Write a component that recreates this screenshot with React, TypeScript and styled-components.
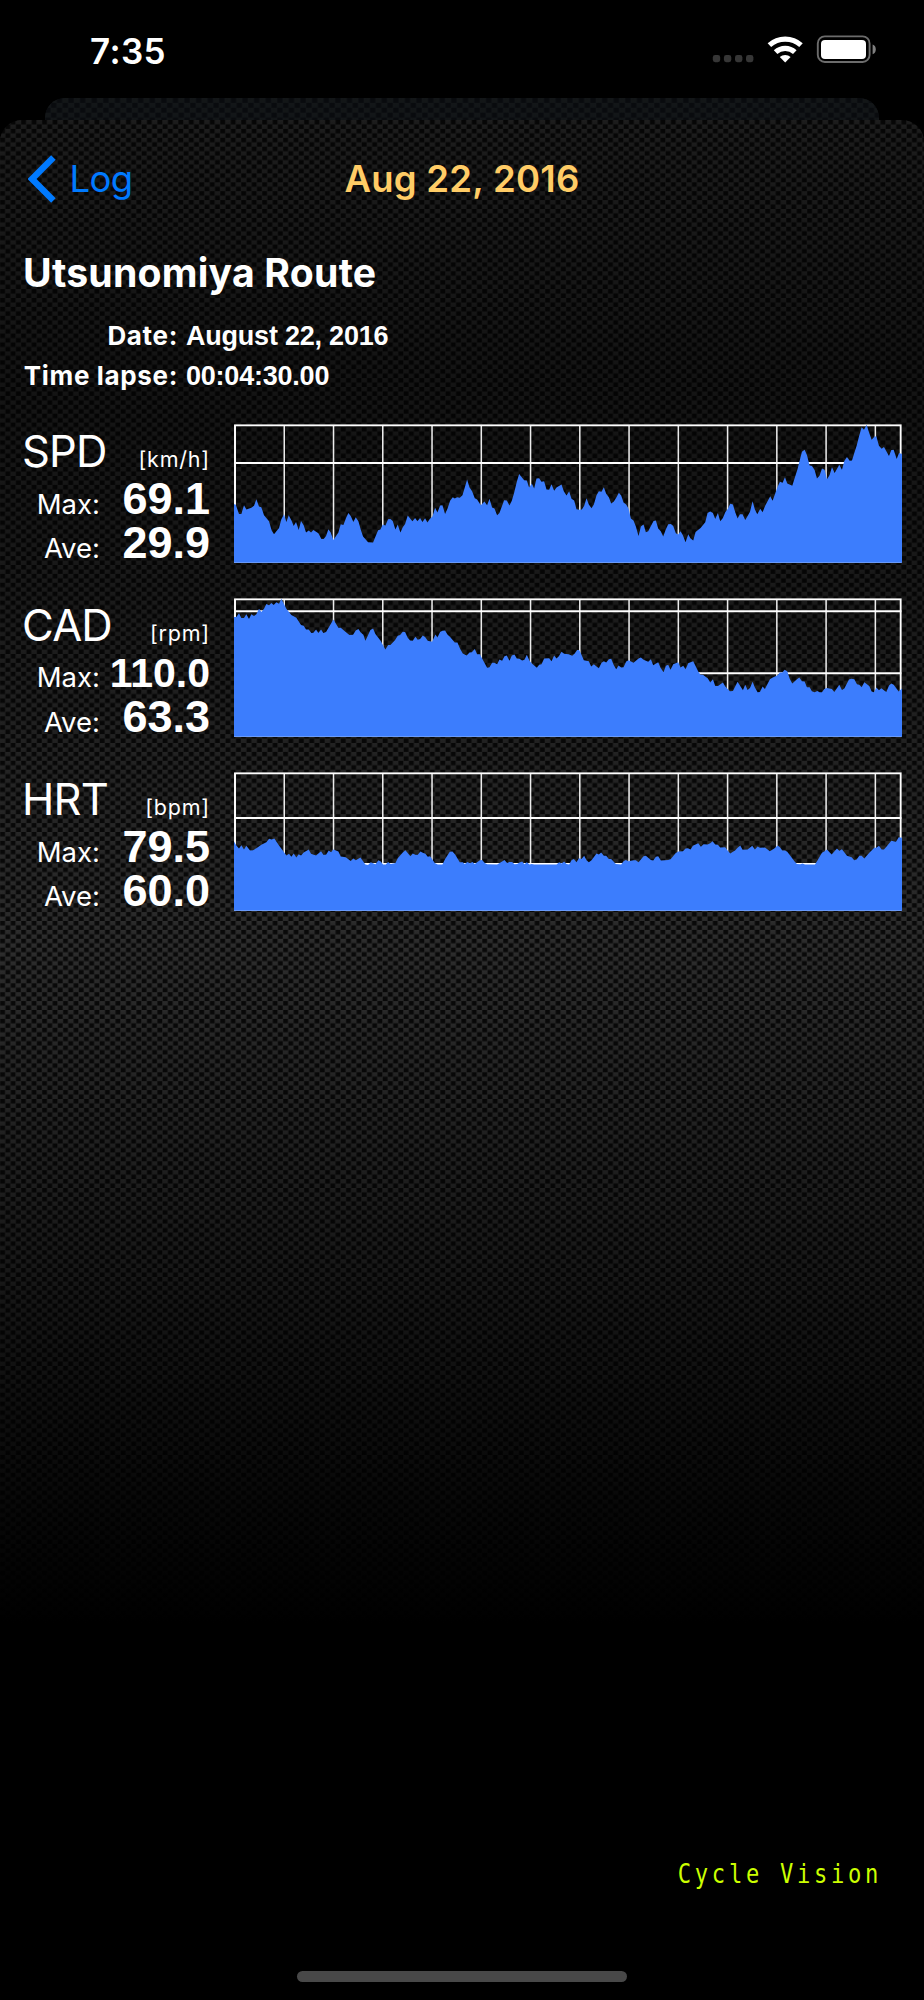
import React from "react";
import styled, { createGlobalStyle } from "styled-components";

const GlobalStyle = createGlobalStyle`
  *, *::before, *::after { box-sizing: border-box; }
  html, body { margin: 0; padding: 0; background: #000; }
  body { font-family: Inter, "Liberation Sans", sans-serif; color: #fff; }
`;

const Screen = styled.div`
  position: relative;
  width: 924px;
  height: 2000px;
  overflow: hidden;
  background: #000;
  display: flex;
  flex-direction: column;
`;

const StatusBar = styled.header`
  height: 98px;
  flex: none;
  display: flex;
  justify-content: space-between;
  align-items: flex-start;
  padding: 33px 46px 0 90px;
`;

const Clock = styled.div`
  font-size: 35px;
  line-height: 36px;
  font-weight: 600;
  letter-spacing: 0.4px;
`;

const StatusIcons = styled.div`
  display: flex;
  padding-top: 1px;
  svg { display: block; }
`;

const BackSheet = styled.div`
  position: relative;
  height: 22px;
  flex: none;
  margin: 0 45px;
  border-radius: 20px 20px 0 0;
  background: #0b0e10;
  overflow: hidden;
`;

const Sheet = styled.main`
  position: relative;
  flex: 1;
  border-radius: 22px 22px 0 0;
  background: #000;
  overflow: hidden;
  display: flex;
  flex-direction: column;
`;

const TextureSvg = styled.svg`
  position: absolute;
  inset: 0;
  width: 100%;
  height: 100%;
  display: block;
`;

const NavBar = styled.nav`
  position: relative;
  height: 118px;
  flex: none;
  display: grid;
  grid-template-columns: 1fr auto 1fr;
  align-items: center;
  padding: 0 28px;
`;

const BackButton = styled.button`
  display: flex;
  align-items: center;
  gap: 13.5px;
  padding: 0;
  border: 0;
  background: none;
  color: #007aff;
  font: 400 36.5px/44px Inter, sans-serif;
  letter-spacing: -0.6px;
`;

const NavTitle = styled.h1`
  margin: 0;
  color: #ffcc66;
  font-size: 36.5px;
  line-height: 44px;
  font-weight: 600;
  letter-spacing: 0.25px;
`;

const RouteName = styled.h2`
  position: relative;
  margin: 11px 0 0 23px;
  font-size: 39.2px;
  line-height: 48px;
  font-weight: 700;
  letter-spacing: 0.2px;
  white-space: nowrap;
`;

const Facts = styled.dl`
  position: relative;
  margin: 19px 0 0 22px;
  display: grid;
  grid-template-columns: 156px auto;
  column-gap: 8px;
  grid-auto-rows: 40px;
  align-items: center;
`;

const FactLabel = styled.dt`
  text-align: right;
  font-size: 26px;
  line-height: 40px;
  font-weight: 700;
  letter-spacing: 0.65px;
  white-space: nowrap;
`;

const FactValue = styled.dd`
  margin: 0;
  font-family: "Liberation Sans", sans-serif;
  font-size: 27px;
  line-height: 40px;
  font-weight: 700;
  letter-spacing: -0.22px;
  white-space: nowrap;
`;

const Metrics = styled.div`
  position: relative;
  margin-top: 27.5px;
  padding: 0 22px 0 22px;
  display: flex;
  flex-direction: column;
  gap: 35px;
`;

const MetricRow = styled.section`
  height: 139px;
  display: grid;
  grid-template-columns: 188px 668px;
  column-gap: 24px;
`;

const Readout = styled.div`
  display: flex;
  flex-direction: column;
`;

const MetricHead = styled.div`
  height: 53px;
  display: flex;
  justify-content: space-between;
  align-items: baseline;
`;

const MetricName = styled.h3`
  margin: 0;
  font-size: 43.5px;
  line-height: 54px;
  font-weight: 400;
  letter-spacing: -0.8px;
`;

const Unit = styled.span`
  font-size: 21.5px;
  font-weight: 400;
  letter-spacing: 0.8px;
`;

const Stat = styled.div`
  height: 44px;
  display: flex;
  align-items: baseline;
  justify-content: space-between;
  line-height: 44px;
`;

const StatLabel = styled.span`
  width: 78px;
  text-align: right;
  font-size: 27.5px;
  font-weight: 400;
`;

const StatValue = styled.span<{ $size: number }>`
  font-family: "Liberation Sans", sans-serif;
  font-size: ${(p) => p.$size}px;
  font-weight: 700;
  white-space: nowrap;
`;

const Chart = styled.svg`
  display: block;
  width: 668px;
  height: 139px;
  overflow: visible;
`;

const Footer = styled.footer`
  position: relative;
  margin-top: auto;
  height: 170px;
  display: flex;
  flex-direction: column;
  align-items: flex-end;
`;

const Brand = styled.div`
  margin: 25.5px 41.5px 0 0;
  color: #ccff00;
  font-family: "DejaVu Sans Mono", monospace;
  font-size: 27px;
  line-height: 36px;
  letter-spacing: 4.5px;
  transform: scaleX(0.82);
  transform-origin: right center;
  white-space: nowrap;
`;

const HomeIndicator = styled.div`
  align-self: center;
  margin-top: 79.5px;
  width: 330px;
  height: 11px;
  border-radius: 6px;
  background: #484848;
`;

interface WeaveProps {
  id: string;
  cellW: number;
  cellH: number;
  tint: string;
  shadow: string;
  fade?: boolean;
}

function Weave({ id, cellW, cellH, tint, shadow, fade }: WeaveProps) {
  const cells = [
    [0, 0],
    [cellW, cellH],
  ];
  return (
    <TextureSvg aria-hidden="true">
      <defs>
        <linearGradient id={`${id}-thread`} x1="0" y1="0" x2="0" y2="1">
          <stop offset="0" stopColor={tint} />
          <stop offset="1" stopColor={tint} stopOpacity="0.62" />
        </linearGradient>
        <pattern id={id} width={cellW * 2} height={cellH * 2} patternUnits="userSpaceOnUse">
          <rect width={cellW * 2} height={cellH * 2} fill={tint} fillOpacity="0.75" />
          <rect x={cellW} y="0" width={cellW} height={cellH} fill={`url(#${id}-thread)`} />
          <rect x="0" y={cellH} width={cellW} height={cellH} fill={`url(#${id}-thread)`} />
          {cells.map(([x, y]) => (
            <rect key={x} x={x + 0.3} y={y} width={cellW - 0.6} height={cellH} fill={shadow} />
          ))}
        </pattern>
        <linearGradient id={`${id}-shade`} x1="0" y1="0" x2="0" y2="1">
          <stop offset="0" stopColor="#000" stopOpacity="0.36" />
          <stop offset="0.14" stopColor="#000" stopOpacity="0.56" />
          <stop offset="0.25" stopColor="#000" stopOpacity="0.42" />
          <stop offset="0.44" stopColor="#000" stopOpacity="0" />
          <stop offset="0.56" stopColor="#000" stopOpacity="0.32" />
          <stop offset="0.8" stopColor="#000" stopOpacity="1" />
          <stop offset="1" stopColor="#000" stopOpacity="1" />
        </linearGradient>
      </defs>
      <rect width="100%" height="100%" fill={`url(#${id})`} />
      {fade && <rect width="100%" height="100%" fill={`url(#${id}-shade)`} />}
    </TextureSvg>
  );
}

interface Metric {
  name: string;
  unit: string;
  max: string;
  ave: string;
  maxSize: number;
  top: number;
  grid: number[];
  trace: string;
}

const METRICS: Metric[] = [
  {
    name: "SPD",
    unit: "[km/h]",
    max: "69.1",
    ave: "29.9",
    maxSize: 45,
    top: 27,
    grid: [144],
    trace:
      "28,267 33,268 43,296 50,296 58,270 65,283 80,278 88,272 95,252 103,274 110,276 118,300 133,318 141,346 148,357 163,338 170,312 178,297 185,320 192,300 200,315 207,332 214,320 222,344 229,317 237,330 244,352 252,346 259,352 266,344 281,354 290,371 297,371 304,362 311,342 318,352 326,374 341,352 348,327 356,329 364,308 371,293 378,302 386,320 393,306 401,318 408,343 415,364 430,381 445,382 460,345 467,343 474,328 482,331 490,312 497,311 504,317 512,343 519,328 527,352 534,336 541,326 549,301 563,318 571,308 578,318 586,308 593,320 601,309 608,322 615,311 623,304 631,278 638,292 646,271 653,270 661,296 668,281 676,257 684,246 690,250 697,246 705,248 713,240 720,217 727,193 734,216 742,228 750,249 757,253 768,270 779,259 787,270 794,251 802,277 809,280 817,300 824,293 838,255 846,256 854,271 861,257 868,233 876,200 883,177 898,195 906,196 913,217 921,205 928,220 935,190 943,189 950,200 958,198 965,223 973,224 980,207 988,227 995,217 1010,208 1017,228 1025,241 1033,228 1040,251 1048,256 1055,282 1063,284 1071,283 1078,272 1085,249 1092,268 1100,279 1107,268 1115,240 1122,228 1130,230 1137,216 1144,236 1152,246 1159,265 1167,259 1174,248 1182,233 1189,241 1196,262 1204,268 1211,280 1218,310 1226,316 1233,334 1241,362 1248,334 1256,328 1263,351 1270,348 1286,317 1293,316 1300,340 1308,349 1315,364 1323,342 1330,327 1338,326 1345,332 1353,354 1360,358 1367,348 1374,360 1382,381 1390,357 1397,370 1405,376 1412,350 1427,338 1441,321 1448,293 1456,289 1464,293 1471,311 1479,293 1486,318 1494,308 1501,291 1508,282 1516,266 1524,268 1531,291 1538,310 1545,297 1553,297 1561,314 1575,290 1583,258 1590,283 1597,297 1606,281 1613,291 1621,271 1636,243 1643,257 1650,237 1658,215 1665,200 1673,203 1680,186 1687,205 1702,212 1709,189 1717,165 1724,137 1731,110 1739,104 1746,120 1754,151 1761,153 1769,165 1776,190 1784,181 1791,160 1799,164 1806,192 1814,180 1821,156 1829,174 1843,149 1851,164 1858,138 1866,126 1874,137 1881,136 1888,114 1895,92 1903,61 1910,37 1917,44 1925,29 1933,55 1940,74 1948,65 1954,64 1962,92 1970,101 1977,96 1992,123 1999,105 2006,104 2015,132 2022,114 2031,117",
  },
  {
    name: "CAD",
    unit: "[rpm]",
    max: "110.0",
    ave: "63.3",
    maxSize: 41,
    top: 25,
    grid: [65, 250],
    trace:
      "28,82 35,82 43,71 50,85 58,85 65,74 73,88 80,74 88,79 95,74 103,57 110,67 118,57 125,43 133,47 140,40 147,46 155,38 163,42 170,27 185,57 200,76 215,84 229,106 237,108 244,119 252,119 260,130 266,129 274,119 281,130 289,119 296,130 304,127 326,89 341,114 348,114 363,127 374,136 385,135 393,122 401,118 408,128 416,135 422,153 437,121 445,116 452,133 467,152 482,179 490,166 497,166 511,151 519,138 526,136 534,126 541,127 549,144 556,152 564,153 572,141 579,150 586,148 594,137 601,142 609,153 622,156 632,134 638,143 646,127 653,123 661,122 668,134 676,142 690,158 698,158 706,177 714,191 726,197 734,188 741,187 750,178 757,193 765,193 787,234 794,232 802,219 809,219 817,223 824,209 832,213 839,199 846,197 854,213 861,197 869,194 876,206 884,207 892,212 899,210 906,195 914,213 922,222 936,234 943,225 950,223 958,206 973,205 980,214 988,197 995,206 1002,199 1010,186 1018,192 1032,193 1042,198 1049,192 1057,181 1063,181 1070,195 1077,211 1092,214 1099,230 1107,223 1115,230 1122,235 1130,219 1137,214 1144,218 1152,208 1159,207 1167,226 1174,238 1181,227 1189,233 1196,232 1204,215 1211,211 1226,219 1241,206 1248,203 1256,210 1270,216 1278,208 1285,226 1300,217 1307,234 1316,247 1323,228 1330,225 1337,240 1345,223 1360,217 1367,233 1375,228 1382,238 1390,220 1397,217 1405,214 1420,245 1427,255 1434,255 1449,266 1456,278 1464,268 1471,288 1479,288 1494,278 1501,290 1515,304 1524,303 1538,276 1554,301 1561,285 1568,300 1575,294 1583,276 1590,293 1598,307 1605,306 1613,290 1620,297 1635,268 1642,264 1658,256 1665,248 1672,248 1679,240 1687,244 1694,266 1702,281 1716,268 1723,263 1731,274 1739,275 1746,292 1754,292 1761,304 1769,307 1777,303 1784,307 1791,307 1798,297 1806,294 1821,297 1828,306 1843,285 1851,300 1858,296 1872,269 1879,267 1888,268 1896,283 1903,285 1910,292 1918,277 1933,288 1940,305 1947,307 1954,293 1962,301 1969,295 1984,306 1992,287 1999,281 2006,285 2021,305 2031,296",
  },
  {
    name: "HRT",
    unit: "[bpm]",
    max: "79.5",
    ave: "60.0",
    maxSize: 45,
    top: 22,
    grid: [160, 297],
    trace:
      "28,230 35,242 43,251 50,241 58,254 65,243 76,257 85,256 95,250 110,240 125,232 133,222 141,224 149,221 163,242 178,262 185,272 193,267 200,276 207,266 215,278 222,268 229,272 237,263 252,254 259,267 274,272 289,259 296,270 304,270 312,257 319,262 326,254 341,260 348,275 363,277 378,288 386,281 393,286 407,278 422,299 430,300 438,292 452,298 461,286 468,290 475,299 483,299 490,291 498,297 512,294 519,280 534,263 542,256 557,274 564,266 572,270 579,270 587,260 594,264 602,267 609,276 616,274 630,294 639,299 653,299 661,282 675,261 683,260 691,269 705,292 714,292 720,297 728,291 735,295 743,291 750,297 765,286 772,285 780,294 787,298 817,299 832,290 839,285 847,294 854,291 862,291 869,298 877,297 884,293 892,290 899,298 906,292 914,299 921,297 928,299 995,299 1003,292 1010,296 1018,290 1025,297 1033,299 1040,286 1047,282 1055,292 1062,280 1070,282 1078,273 1085,286 1092,292 1100,286 1115,266 1122,269 1129,263 1137,273 1144,273 1152,282 1159,282 1173,297 1189,299 1196,289 1203,285 1211,289 1226,286 1233,286 1241,292 1256,274 1263,273 1278,285 1285,287 1293,276 1300,274 1308,287 1330,285 1337,283 1352,265 1360,260 1374,259 1382,251 1389,250 1397,254 1404,243 1412,239 1420,235 1428,246 1436,238 1448,239 1456,235 1463,229 1471,239 1479,240 1486,248 1501,247 1508,257 1516,266 1531,256 1538,249 1546,242 1553,255 1568,254 1582,243 1590,254 1598,245 1605,249 1620,248 1635,259 1649,250 1658,242 1665,247 1672,257 1680,257 1687,261 1709,290 1716,297 1726,298 1733,296 1740,299 1770,299 1776,289 1791,264 1799,259 1806,254 1820,269 1836,251 1843,258 1851,253 1866,273 1880,277 1888,286 1895,284 1903,273 1910,273 1918,281 1925,273 1933,264 1948,249 1954,249 1962,243 1970,254 1977,254 1984,246 1999,228 2013,231 2021,217 2031,219",
  },
];

const GRID_COLUMNS = Array.from({ length: 14 }, (_, i) => 31 + i * 147.7);

function MetricChart({ top, grid, trace }: Metric) {
  const bottom = top + 415;
  return (
    <Chart viewBox={`28 ${top} 2003 416`} preserveAspectRatio="none">
      <g stroke="#fff" fill="none">
        {GRID_COLUMNS.map((x) => (
          <line key={x} x1={x} x2={x} y1={top + 3} y2={bottom} strokeWidth="4.6" strokeOpacity="0.92" />
        ))}
        {grid.map((y) => (
          <line key={y} x1="28" x2="2029" y1={y} y2={y} strokeWidth="6" />
        ))}
        <rect x="31" y={top + 4} width="1996" height="409" strokeWidth="5.6" />
      </g>
      <polygon points={`28,${bottom} ${trace} 2031,${bottom}`} fill="#3c7dfd" />
    </Chart>
  );
}

function SignalIcons() {
  return (
    <svg width="166" height="30" viewBox="712 35 166 30" aria-hidden="true">
      {[712.8, 723.9, 735, 746].map((x) => (
        <rect key={x} x={x} y="56" width="7.4" height="7.2" rx="2.4" fill="#363636" />
      ))}
      <g fill="none" stroke="#fff" strokeWidth="5.2">
        <path d="M769.4 46.2 A23.5 23.5 0 0 1 801 46.2" />
        <path d="M775.6 53.1 A14 14 0 0 1 794.8 53.1" />
      </g>
      <path d="M785.2 63.4 L779.8 58 A8 8 0 0 1 790.6 58 Z" fill="#fff" />
      <rect x="817.8" y="37.4" width="51.8" height="25.6" rx="7" fill="none" stroke="#6c6c6c" strokeWidth="1.9" />
      <rect x="821" y="41" width="45" height="19" rx="4" fill="#fff" />
      <path d="M872.6 45.6 A5.2 5.2 0 0 1 872.6 55.2 Z" fill="#808080" />
    </svg>
  );
}

export default function App() {
  return (
    <>
      <GlobalStyle />
      <Screen>
        <StatusBar>
          <Clock>7:35</Clock>
          <StatusIcons>
            <SignalIcons />
          </StatusIcons>
        </StatusBar>
        <BackSheet>
          <Weave id="weave-back" cellW={5.8} cellH={4.9} tint="#131618" shadow="#090b0e" />
        </BackSheet>
        <Sheet>
          <Weave id="weave" cellW={5.24} cellH={4.45} tint="#2e2e2e" shadow="#090909" fade />
          <NavBar>
            <BackButton>
              <svg width="28" height="48" viewBox="0 0 28 48" aria-hidden="true">
                <path d="M25.4 2.5 L4 24 L25.4 45.5" fill="none" stroke="#007aff" strokeWidth="6.4" />
              </svg>
              Log
            </BackButton>
            <NavTitle>Aug 22, 2016</NavTitle>
          </NavBar>
          <RouteName>Utsunomiya Route</RouteName>
          <Facts>
            <FactLabel>Date:</FactLabel>
            <FactValue>August 22, 2016</FactValue>
            <FactLabel>Time lapse:</FactLabel>
            <FactValue>00:04:30.00</FactValue>
          </Facts>
          <Metrics>
            {METRICS.map((m) => (
              <MetricRow key={m.name}>
                <Readout>
                  <MetricHead>
                    <MetricName>{m.name}</MetricName>
                    <Unit>{m.unit}</Unit>
                  </MetricHead>
                  <Stat>
                    <StatLabel>Max:</StatLabel>
                    <StatValue $size={m.maxSize}>{m.max}</StatValue>
                  </Stat>
                  <Stat>
                    <StatLabel>Ave:</StatLabel>
                    <StatValue $size={45}>{m.ave}</StatValue>
                  </Stat>
                </Readout>
                <MetricChart {...m} />
              </MetricRow>
            ))}
          </Metrics>
          <Footer>
            <Brand>Cycle Vision</Brand>
            <HomeIndicator />
          </Footer>
        </Sheet>
      </Screen>
    </>
  );
}
